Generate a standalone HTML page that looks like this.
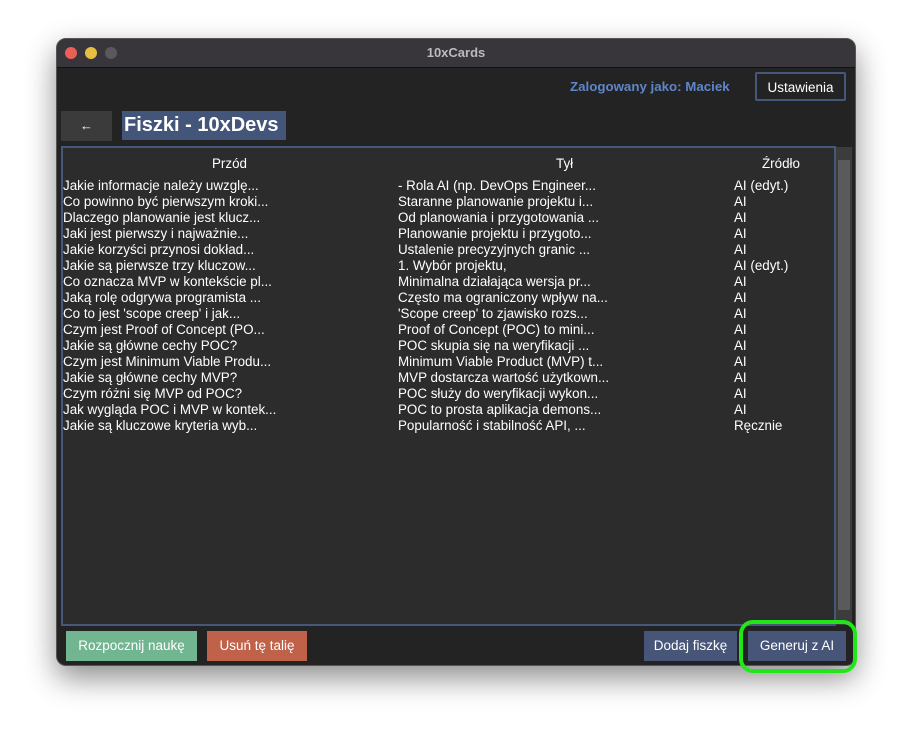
<!DOCTYPE html>
<html><head><meta charset="utf-8"><style>
body{margin:0;width:912px;height:740px;background:#fff;font-family:"Liberation Sans",sans-serif;position:relative;overflow:hidden}
.win{position:absolute;left:56px;top:38px;width:800px;height:628px;background:#232323;border-radius:10px;box-shadow:0 12px 30px rgba(0,0,0,.45);overflow:hidden;border:1px solid #555;box-sizing:border-box}
.tb{height:28px;background:#38363b;border-bottom:1px solid #111;color:#bbb;font-size:13px;font-weight:bold;text-align:center;line-height:28px;position:relative}
.dot{position:absolute;top:8px;width:12px;height:12px;border-radius:6px}
.abs{position:absolute}
.btn{position:absolute;color:#fff;font-size:13.5px;text-align:center;line-height:30px;height:30px}
.row{position:absolute;font-size:13.4px;color:#fff;white-space:nowrap}
</style></head><body>
<div class="win">
<div class="tb"><div class="dot" style="left:8px;background:#ec5f57"></div><div class="dot" style="left:28px;background:#e6bf42"></div><div class="dot" style="left:48px;background:#5a585d"></div>10xCards</div>
</div>
<div class="abs" style="left:570px;top:79px;color:#5e86c8;font-size:13.3px;font-weight:bold">Zalogowany jako: Maciek</div>
<div class="abs" style="left:755px;top:72px;width:91px;height:29px;border:2px solid #45587c;border-radius:2px;color:#fff;font-size:13.5px;text-align:center;line-height:27px;box-sizing:border-box">Ustawienia</div>
<div class="abs" style="left:61px;top:111px;width:51px;height:30px;background:#3b3b3b;color:#fff;text-align:center;line-height:30px;font-size:13px">←</div>
<div class="abs" style="left:122px;top:111px;width:164px;height:29px;background:#44557a;color:#fff;font-weight:bold;font-size:20px;line-height:29px;padding-left:2px;box-sizing:border-box">Fiszki - 10xDevs</div>
<div class="abs" style="left:61px;top:146px;width:775px;height:480px;border:2px solid #45587c;background:#2c2c2c;box-sizing:border-box"></div>
<div class="abs" style="left:836px;top:147px;width:16px;height:478px;background:#3c3c3c"></div>
<div class="abs" style="left:838px;top:160px;width:12px;height:450px;background:#5a5a5a"></div>
<div class="row" style="left:212px;top:156px">Przód</div>
<div class="row" style="left:556px;top:156px">Tył</div>
<div class="row" style="left:762px;top:156px">Źródło</div>
<div id="rows"></div>
<script>
var d=[["Jakie informacje należy uwzglę...","- Rola AI (np. DevOps Engineer...","AI (edyt.)"],["Co powinno być pierwszym kroki...","Staranne planowanie projektu i...","AI"],["Dlaczego planowanie jest klucz...","Od planowania i przygotowania ...","AI"],["Jaki jest pierwszy i najważnie...","Planowanie projektu i przygoto...","AI"],["Jakie korzyści przynosi dokład...","Ustalenie precyzyjnych granic ...","AI"],["Jakie są pierwsze trzy kluczow...","1. Wybór projektu,","AI (edyt.)"],["Co oznacza MVP w kontekście pl...","Minimalna działająca wersja pr...","AI"],["Jaką rolę odgrywa programista ...","Często ma ograniczony wpływ na...","AI"],["Co to jest 'scope creep' i jak...","'Scope creep' to zjawisko rozs...","AI"],["Czym jest Proof of Concept (PO...","Proof of Concept (POC) to mini...","AI"],["Jakie są główne cechy POC?","POC skupia się na weryfikacji ...","AI"],["Czym jest Minimum Viable Produ...","Minimum Viable Product (MVP) t...","AI"],["Jakie są główne cechy MVP?","MVP dostarcza wartość użytkown...","AI"],["Czym różni się MVP od POC?","POC służy do weryfikacji wykon...","AI"],["Jak wygląda POC i MVP w kontek...","POC to prosta aplikacja demons...","AI"],["Jakie są kluczowe kryteria wyb...","Popularność i stabilność API, ...","Ręcznie"]];
var h="";d.forEach(function(r,i){var t=178+i*16;h+='<div class="row" style="left:63px;top:'+t+'px">'+r[0]+'</div><div class="row" style="left:398px;top:'+t+'px">'+r[1]+'</div><div class="row" style="left:734px;top:'+t+'px">'+r[2]+'</div>';});document.getElementById("rows").innerHTML=h;
</script>
<div class="btn" style="left:66px;top:631px;width:131px;background:#72b591">Rozpocznij naukę</div>
<div class="btn" style="left:207px;top:631px;width:100px;background:#c0624a">Usuń tę talię</div>
<div class="btn" style="left:644px;top:631px;width:93px;background:#475578">Dodaj fiszkę</div>
<div class="btn" style="left:748px;top:631px;width:98px;background:#475578">Generuj z AI</div>
<div class="abs" style="left:739px;top:620px;width:118px;height:53px;border:4px solid #22e61a;border-radius:14px;box-sizing:border-box"></div>
</body></html>
